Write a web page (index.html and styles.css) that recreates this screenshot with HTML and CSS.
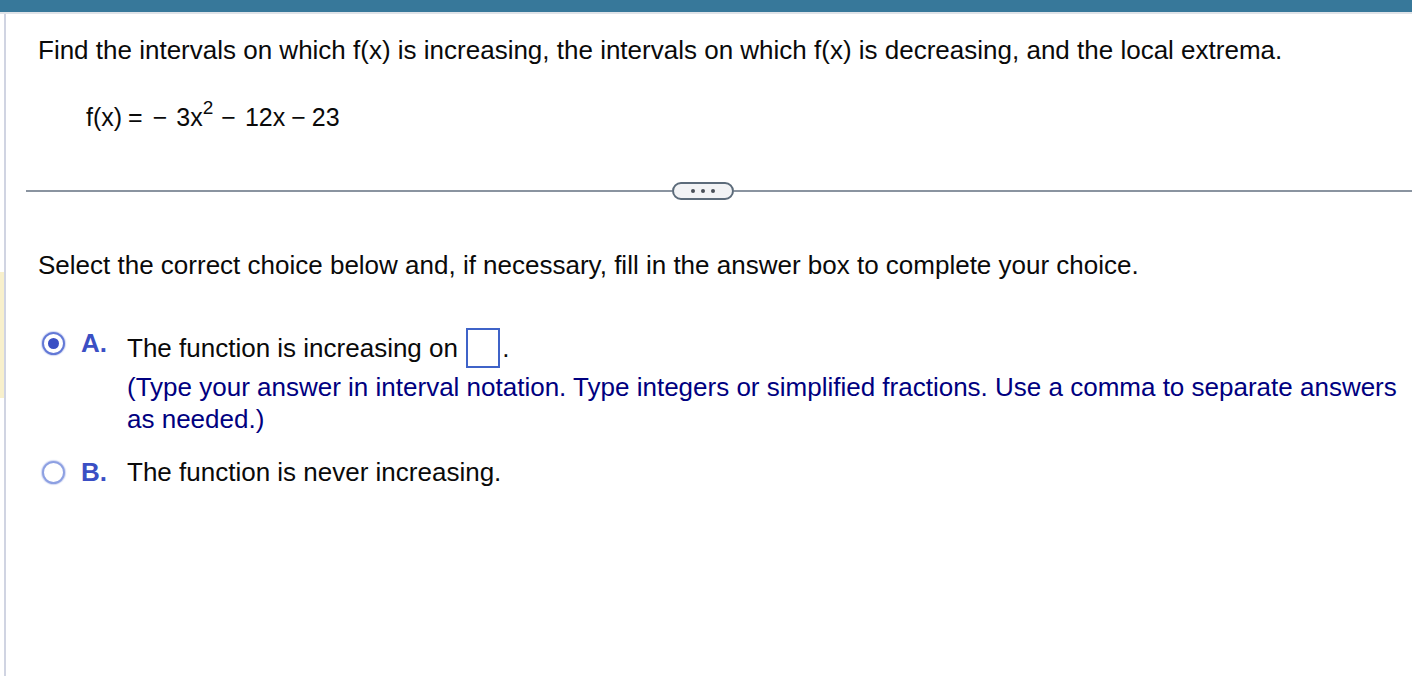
FILE: index.html
```html
<!DOCTYPE html>
<html>
<head>
<meta charset="utf-8">
<link rel="stylesheet" href="styles.css">
</head>
<body>
<div class="topbar"></div>
<div class="main">
  <div class="gutter"><div class="highlight"></div></div>
  <div class="rail"></div>
  <div class="content">
    <p class="question">Find the intervals on which f(x) is increasing, the intervals on which f(x) is decreasing, and the local extrema.</p>
    <p class="equation">f(x)<span class="eq">=</span><span class="op">−</span>3x<sup class="sup">2</sup><span class="op">−</span>12x<span class="op2">−</span>23</p>
    <div class="separator">
      <div class="sepline short"></div>
      <div class="pill"><span class="dot"></span><span class="dot"></span><span class="dot"></span></div>
      <div class="sepline"></div>
    </div>
    <p class="select">Select the correct choice below and, if necessary, fill in the answer box to complete your choice.</p>
    <div class="choice choice-a">
      <div class="radio checked"><span class="inner"></span></div>
      <div class="letter">A.</div>
      <div class="body">
        <div class="line-a">The function is increasing on <span class="answer"></span>.</div>
        <div class="hint">(Type your answer in interval notation. Type integers or simplified fractions. Use a comma to separate answers as needed.)</div>
      </div>
    </div>
    <div class="choice choice-b">
      <div class="radio"></div>
      <div class="letter">B.</div>
      <div class="body"><div class="line-b">The function is never increasing.</div></div>
    </div>
  </div>
</div>
</body>
</html>
```
FILE: styles.css
```css
* { box-sizing: border-box; }
html, body { margin: 0; padding: 0; background: #fff; }
body {
  font-family: "Liberation Sans", Arial, sans-serif;
  color: #0a0a0a;
  width: 1412px;
  height: 676px;
  overflow: hidden;
}
.topbar {
  height: 14px;
  background: #37789a;
  border-bottom: 2px solid #dfe3e8;
}
.main {
  display: flex;
  height: 662px;
}
.gutter {
  width: 4px;
  flex: none;
}
.highlight {
  margin-top: 258px;
  height: 126px;
  background: #f8f0cc;
}
.rail {
  width: 2px;
  flex: none;
  background: #d0d4e2;
}
.content {
  flex: 1;
  padding: 21px 0 0 32px;
  font-size: 26px;
}
p { margin: 0; }
.question {
  line-height: 30px;
}
.equation {
  margin-top: 37px;
  padding-left: 48px;
  line-height: 30px;
  height: 30px;
  font-size: 25px;
}
.eq { margin: 0 10px 0 6px; }
.op { margin: 0 9px 0 0; }
.sup { font-size: 19px; vertical-align: 0; position: relative; top: -12px; margin-right: 8px; }
.op2 { margin: 0 6px; }
.equation .op + .op { margin-right: 9px; }
.separator {
  margin-top: 50px;
  margin-left: -12px;
  height: 18px;
  display: flex;
  align-items: center;
}
.sepline {
  flex: 1;
  height: 2px;
  background: #8a94a0;
}
.sepline.short { flex: none; width: 646px; }
.pill {
  width: 62px;
  height: 18px;
  border: 2px solid #5c6b7a;
  border-radius: 9px;
  background: #f2f3f5;
  display: flex;
  align-items: center;
  justify-content: center;
  gap: 6px;
}
.dot {
  width: 4px;
  height: 4px;
  border-radius: 50%;
  background: #4a5058;
}
.select {
  margin-top: 50px;
  line-height: 30px;
}
.choice {
  display: flex;
  align-items: flex-start;
}
.choice-a { margin-top: 48px; }
.choice-b { margin-top: 22px; }
.radio {
  flex: none;
  width: 23px;
  height: 23px;
  margin-left: 4px;
  border-radius: 50%;
  border: 2px solid #8da0e2;
  box-shadow: 0 0 1px 1px rgba(120,140,220,0.35);
  display: flex;
  align-items: center;
  justify-content: center;
  background: #fff;
}
.choice-a .radio { margin-top: 4px; border-color: #6278d6; }
.choice-b .radio { margin-top: 4px; }
.inner {
  width: 11px;
  height: 11px;
  border-radius: 50%;
  background: #3a4fc4;
}
.letter {
  flex: none;
  width: 46px;
  margin-left: 16px;
  font-weight: bold;
  color: #3b4fc4;
  line-height: 30px;
}
.body { flex: 1; }
.line-a {
  height: 40px;
  display: flex;
  align-items: center;
  white-space: pre;
}
.answer {
  display: inline-block;
  width: 34px;
  height: 40px;
  border: 2px solid #3f63c8;
  margin: 0 2px 0 1px;
}
.hint {
  margin-top: 3px;
  color: #000080;
  line-height: 32px;
  padding-right: 4px;
}
.line-b { line-height: 30px; }
```
